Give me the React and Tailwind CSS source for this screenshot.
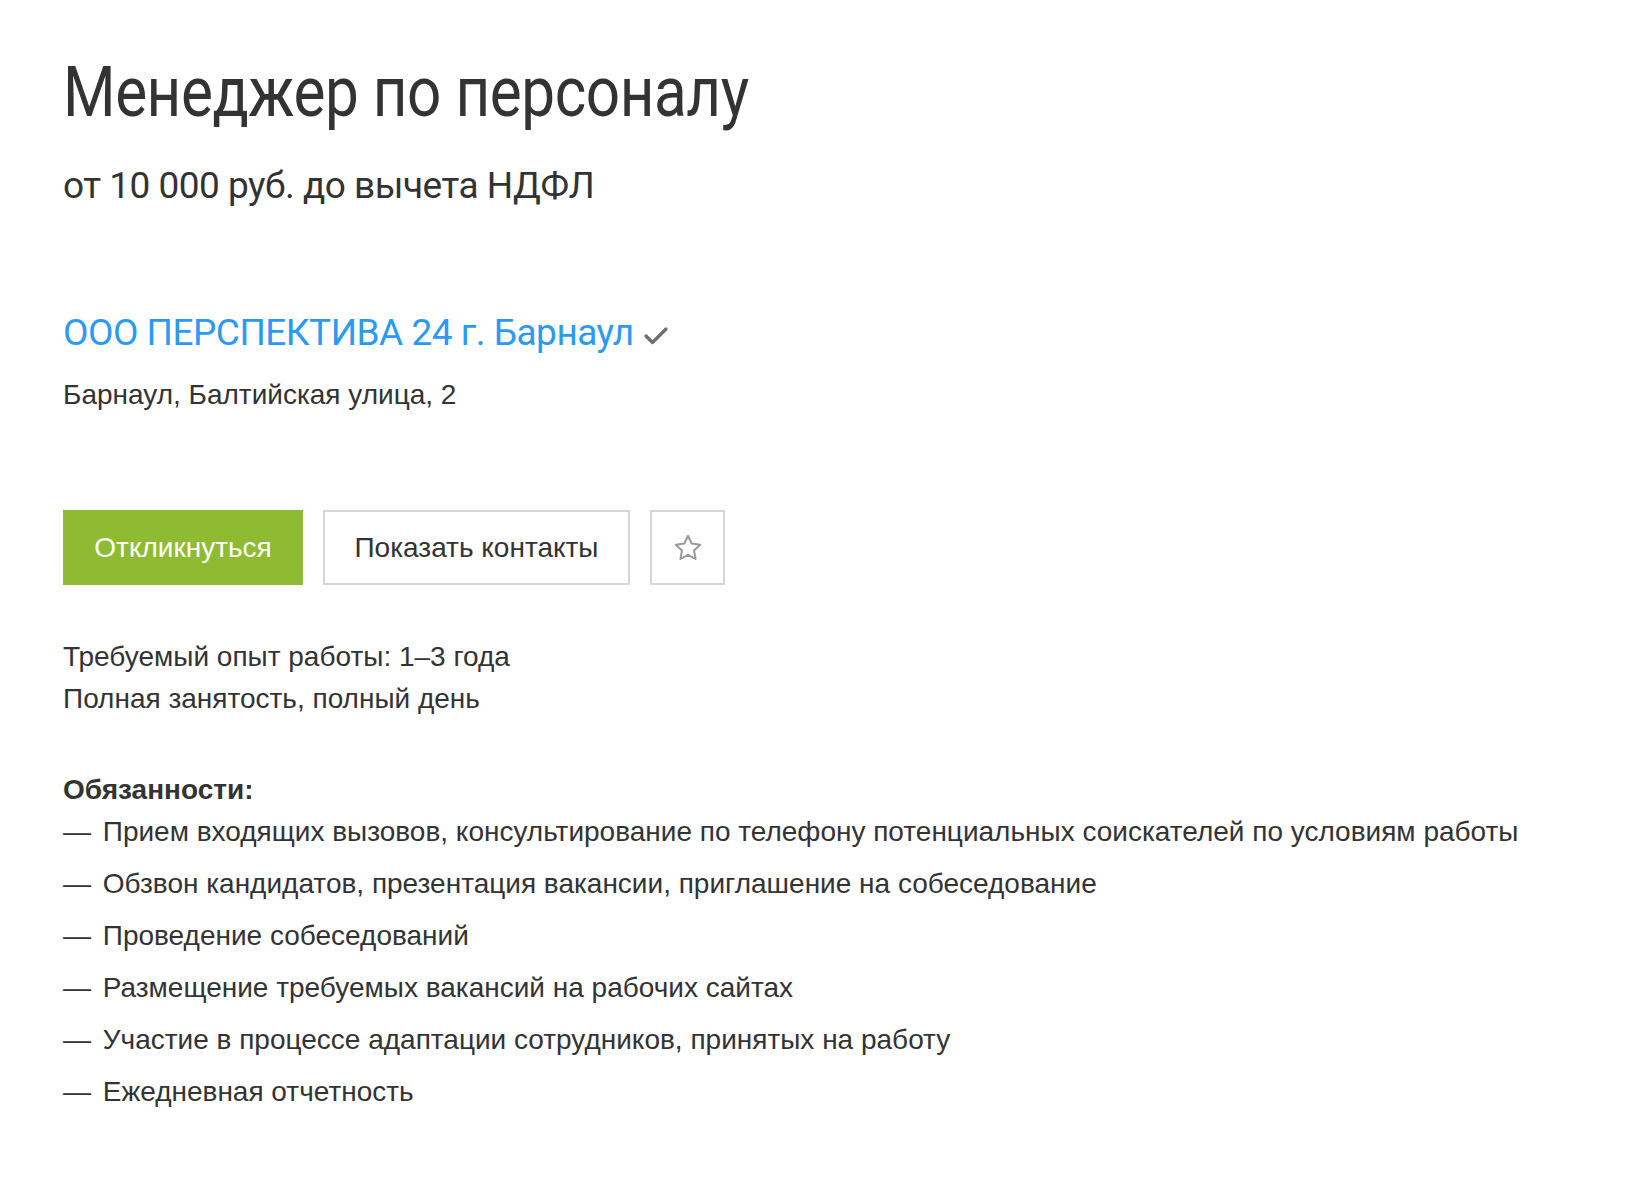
import React from 'react';

const duties = [
  'Прием входящих вызовов, консультирование по телефону потенциальных соискателей по условиям работы',
  'Обзвон кандидатов, презентация вакансии, приглашение на собеседование',
  'Проведение собеседований',
  'Размещение требуемых вакансий на рабочих сайтах',
  'Участие в процессе адаптации сотрудников, принятых на работу',
  'Ежедневная отчетность',
];

const StarIcon = () => (
  <svg width="32" height="32" viewBox="0 0 24 24" fill="none" stroke="#9a9a9a" strokeWidth="1.5" strokeLinejoin="round">
    <path d="M12 2.8l2.8 5.9 6.4.8-4.7 4.4 1.2 6.3L12 17.1l-5.7 3.1 1.2-6.3-4.7-4.4 6.4-.8z" />
  </svg>
);

const App = () => {
  return (
    <div className="min-h-screen bg-white text-[#333]">
      <div className="px-[63px] pt-[50px] pb-16">
        {/* Header */}
        <h1 className="origin-left scale-x-[0.86] whitespace-nowrap font-['Roboto',sans-serif] text-[70px] leading-[84px] font-normal tracking-[-0.5px] text-[#333]">
          Менеджер по персоналу
        </h1>
        <p className="mt-[28px] font-['Roboto',sans-serif] text-[37px] leading-[48px] tracking-[-0.5px] text-[#333]">
          от 10 000 руб. до вычета НДФЛ
        </p>

        {/* Company */}
        <div className="mt-[100px] flex h-[46px] items-center gap-[8px]">
          <a href="#" className="font-['Roboto',sans-serif] text-[37px] leading-[46px] tracking-[-0.5px] text-[#2b9af3]">
            ООО ПЕРСПЕКТИВА 24 г. Барнаул
          </a>
          <svg width="28" height="24" viewBox="0 0 28 24" fill="none" stroke="#6e6e6e" strokeWidth="3.2" strokeLinecap="round" strokeLinejoin="round" className="mt-[6px]">
            <path d="M4 12l6.5 6.5L24 5" />
          </svg>
        </div>
        <p className="mt-[22px] font-['Liberation_Sans',Arial,sans-serif] text-[28px] leading-[34px]">
          Барнаул, Балтийская улица, 2
        </p>

        {/* Buttons */}
        <div className="mt-[98px] flex gap-[20px]">
          <button className="h-[75px] w-[240px] bg-[#8fbb33] font-['Liberation_Sans',Arial,sans-serif] text-[28px] text-white">
            Откликнуться
          </button>
          <button className="h-[75px] w-[307px] border-2 border-[#d3d6da] bg-white font-['Liberation_Sans',Arial,sans-serif] text-[28px] text-[#333]">
            Показать контакты
          </button>
          <button className="flex h-[75px] w-[75px] items-center justify-center border-2 border-[#d3d6da] bg-white">
            <StarIcon />
          </button>
        </div>

        {/* Details */}
        <div className="mt-[51px] font-['Liberation_Sans',Arial,sans-serif] text-[28px] leading-[42px]">
          <p>Требуемый опыт работы: 1–3 года</p>
          <p>Полная занятость, полный день</p>
        </div>

        <div className="mt-[54px] font-['Liberation_Sans',Arial,sans-serif] text-[28px]">
          <p className="font-bold leading-[32px]">Обязанности:</p>
          <ul className="flex flex-col">
            {duties.map((d) => (
              <li key={d} className="leading-[52px]">
                <span className="mr-[4px]">—</span> {d}
              </li>
            ))}
          </ul>
        </div>
      </div>
    </div>
  );
};

export default App;
